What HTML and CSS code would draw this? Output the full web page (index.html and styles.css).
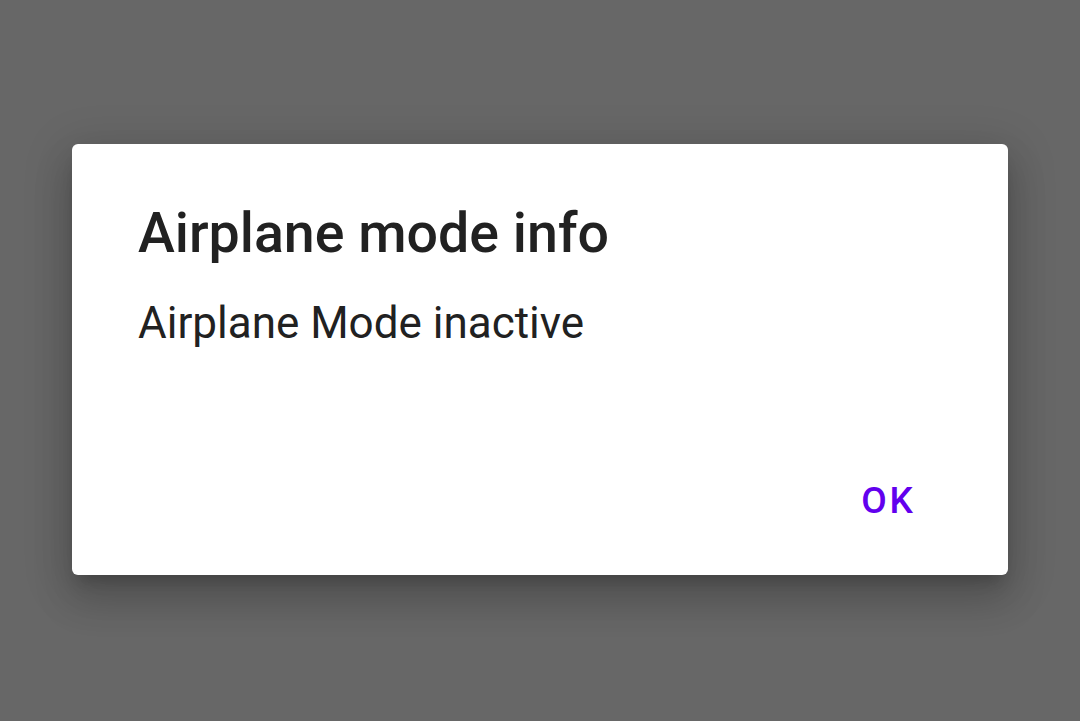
FILE: index.html
```html
<!DOCTYPE html>
<html>
<head>
<meta charset="utf-8">
<link rel="stylesheet" href="styles.css">
</head>
<body>
<div class="dialog">
  <h1 class="title">Airplane mode info</h1>
  <p class="message">Airplane Mode inactive</p>
  <div class="actions">
    <button class="btn">OK</button>
  </div>
</div>
</body>
</html>
```
FILE: styles.css
```css
html, body {
  margin: 0;
  padding: 0;
  width: 1080px;
  height: 721px;
  overflow: hidden;
}
body {
  background: #676767;
  font-family: Roboto, "Liberation Sans", sans-serif;
  padding: 144px 0 0 72px;
  box-sizing: border-box;
}
.dialog {
  width: 936px;
  height: 431px;
  box-sizing: border-box;
  background: #ffffff;
  border-radius: 6px;
  box-shadow: 0 24px 38px 3px rgba(0,0,0,0.14), 0 9px 46px 8px rgba(0,0,0,0.12), 0 11px 15px -7px rgba(0,0,0,0.2);
  padding: 57px 0 0 66px;
  display: flex;
  flex-direction: column;
}
.title {
  margin: 0;
  font-size: 55.5px;
  font-weight: 500;
  color: #212121;
  line-height: normal;
}
.message {
  margin: 31px 0 0 0;
  font-size: 44px;
  font-weight: 400;
  color: #212121;
  line-height: normal;
}
.actions {
  display: flex;
  justify-content: flex-end;
  padding-right: 92px;
  margin-top: 130px;
}
.btn {
  border: none;
  background: none;
  padding: 0;
  font-family: Roboto, "Liberation Sans", sans-serif;
  font-size: 37px;
  font-weight: 500;
  letter-spacing: 3px;
  color: #6200ee;
  line-height: normal;
}
```
